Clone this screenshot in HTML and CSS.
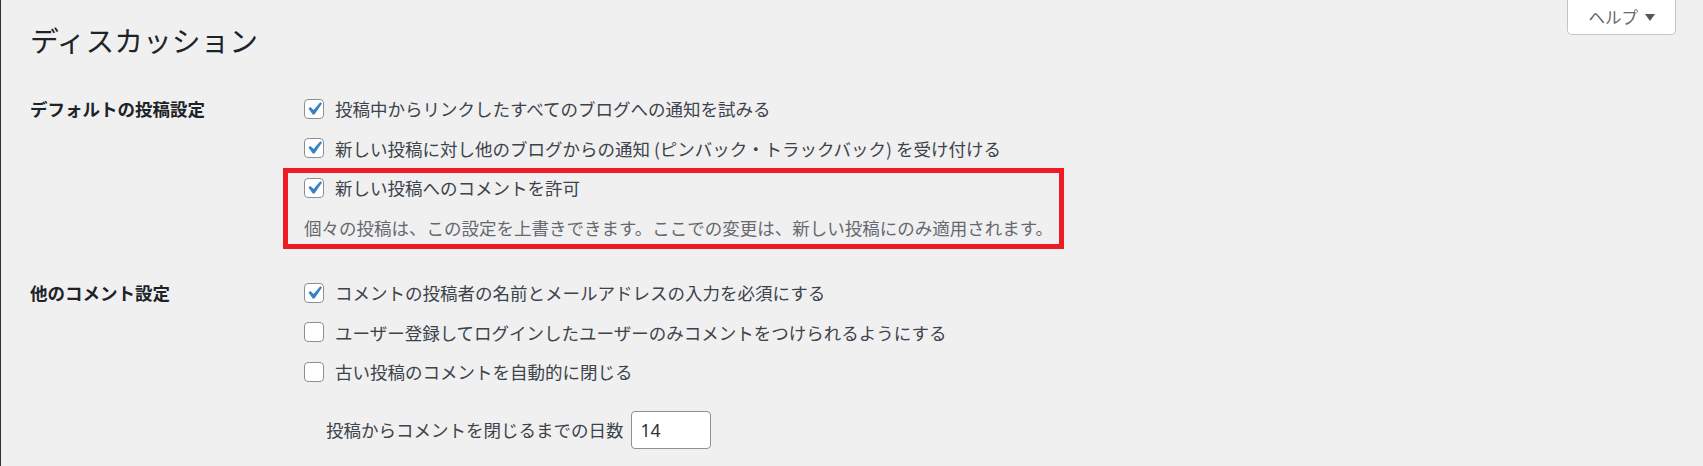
FILE: index.html
```html
<!DOCTYPE html>
<html lang="ja">
<head>
    <meta charset="utf-8">
    <title>ディスカッション設定</title>
    <link rel="stylesheet" href="styles.css">
</head>
<body>
    <div class="help-tab">ヘルプ <span class="arrow"></span></div>

    <div class="wrap">
        <h1>ディスカッション</h1>

        <!-- デフォルトの投稿設定 -->
        <div class="form-row first">
            <div class="row-label">デフォルトの投稿設定</div>
            <div class="row-body">
                <label class="option"><span class="check on"><svg viewBox="0 0 20 20"><path d="M14.83 4.89l1.34.94-5.81 8.38H9.02L5.78 9.67l1.34-1.25 2.57 2.4z"/></svg></span>投稿中からリンクしたすべてのブログへの通知を試みる</label>
                <label class="option"><span class="check on"><svg viewBox="0 0 20 20"><path d="M14.83 4.89l1.34.94-5.81 8.38H9.02L5.78 9.67l1.34-1.25 2.57 2.4z"/></svg></span>新しい投稿に対し他のブログからの通知 (ピンバック・トラックバック) を受け付ける</label>
                <div class="highlight">
                    <label class="option"><span class="check on"><svg viewBox="0 0 20 20"><path d="M14.83 4.89l1.34.94-5.81 8.38H9.02L5.78 9.67l1.34-1.25 2.57 2.4z"/></svg></span>新しい投稿へのコメントを許可</label>
                    <p class="description">個々の投稿は、この設定を上書きできます。ここでの変更は、新しい投稿にのみ適用されます。</p>
                </div>
            </div>
        </div>

        <!-- 他のコメント設定 -->
        <div class="form-row second">
            <div class="row-label">他のコメント設定</div>
            <div class="row-body">
                <label class="option"><span class="check on"><svg viewBox="0 0 20 20"><path d="M14.83 4.89l1.34.94-5.81 8.38H9.02L5.78 9.67l1.34-1.25 2.57 2.4z"/></svg></span>コメントの投稿者の名前とメールアドレスの入力を必須にする</label>
                <label class="option"><span class="check"></span>ユーザー登録してログインしたユーザーのみコメントをつけられるようにする</label>
                <label class="option"><span class="check"></span>古い投稿のコメントを自動的に閉じる</label>
                <div class="days">
                    <span>投稿からコメントを閉じるまでの日数</span>
                    <span class="num-input">14</span>
                </div>
            </div>
        </div>
    </div>
</body>
</html>
```

FILE: styles.css
```css
html, body { margin: 0; padding: 0; }
body {
    background: #f0f0f1;
    border-left: 1px solid #2c3338;
    min-height: 466px;
    box-sizing: border-box;
    font-family: "Noto Sans CJK JP", "Noto Sans", sans-serif;
    font-size: 17.5px;
    line-height: 24px;
    color: #3c434a;
}

.help-tab {
    float: right;
    margin-right: 27px;
    height: 35px;
    padding: 0 20px 0 21px;
    box-sizing: border-box;
    display: flex;
    align-items: center;
    gap: 7px;
    background: #fff;
    border: 1px solid #c3c4c7;
    border-top: none;
    border-radius: 0 0 5px 5px;
    color: #646970;
    font-size: 16.5px;
}
.help-tab .arrow {
    width: 0;
    height: 0;
    border-left: 5px solid transparent;
    border-right: 5px solid transparent;
    border-top: 7px solid #50575e;
    margin-top: 1px;
}

.wrap { padding-left: 29px; }

h1 {
    margin: 0;
    padding-top: 21px;
    font-size: 28.75px;
    line-height: 37px;
    font-weight: 400;
    color: #1d2327;
}

.form-row {
    display: grid;
    grid-template-columns: 274px 1fr;
}
.form-row.first { margin-top: 39px; }
.form-row.second { margin-top: 32px; }

.row-label {
    font-weight: 700;
    color: #1d2327;
}

.option {
    display: flex;
    align-items: center;
    gap: 11px;
    height: 24px;
    margin-bottom: 15.5px;
}

.check {
    width: 20px;
    height: 20px;
    box-sizing: border-box;
    flex: none;
    background: #fff;
    border: 1px solid #8c8f94;
    border-radius: 4px;
    position: relative;
    margin-top: -1px;
}
.check svg {
    position: absolute;
    left: -4px;
    top: -4px;
    width: 26px;
    height: 26px;
    fill: #3582c4;
}

.highlight {
    width: 781px;
    box-sizing: border-box;
    border: 5px solid #ed1c24;
    margin: -8px 0 0 -21px;
    padding: 3px 0 4.5px 16px;
}

.description {
    margin: 0;
    color: #646970;
}

.days {
    display: flex;
    align-items: center;
    gap: 7px;
    margin-top: 27px;
    padding-left: 22px;
}
.num-input {
    width: 80px;
    height: 38px;
    box-sizing: border-box;
    background: #fff;
    border: 1px solid #8c8f94;
    border-radius: 4px;
    padding: 0 9px;
    display: flex;
    align-items: center;
    color: #2c3338;
    font-family: "Noto Sans", sans-serif;
}
```
